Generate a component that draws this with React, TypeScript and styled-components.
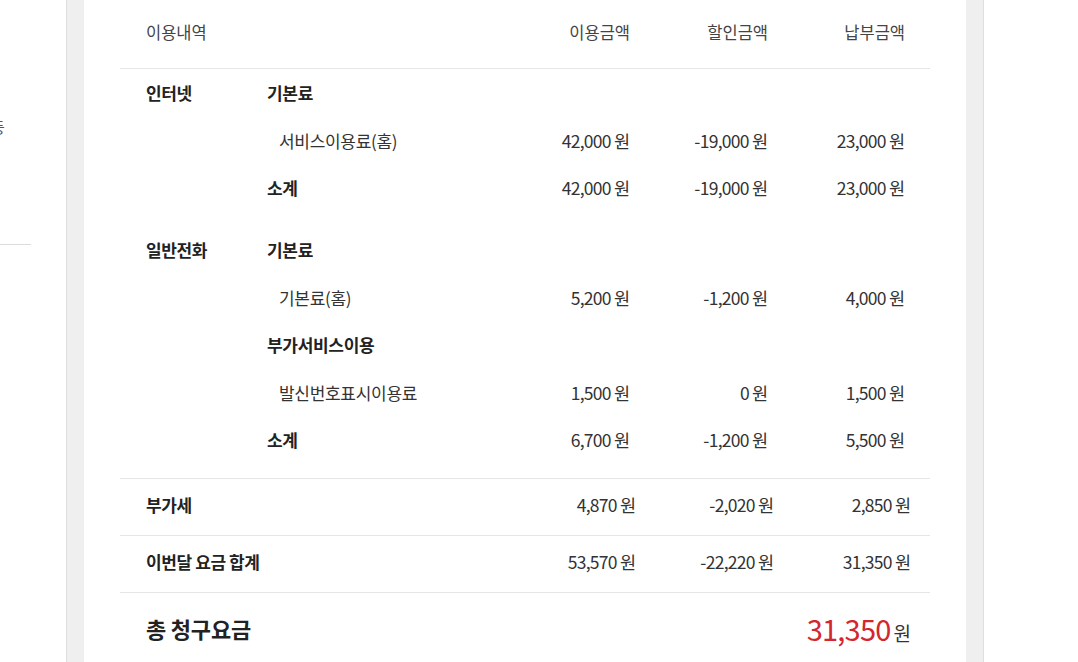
import React from "react";
import styled, { createGlobalStyle } from "styled-components";

const Global = createGlobalStyle`
  html, body { margin: 0; padding: 0; background: #fff; }
  body { font-family: "Noto Sans CJK KR", "Noto Sans", sans-serif; color: #333; }
  * { box-sizing: border-box; }
`;

const Page = styled.div`
  display: flex;
  width: 1078px;
  height: 662px;
  overflow: hidden;
  background: #fff;
`;

const SidePane = styled.div`
  width: 66px;
  flex: none;
  overflow: hidden;
  display: flex;
  flex-direction: column;
`;

const SideText = styled.div`
  margin: 116px 0 0 -9px;
  font-size: 15px;
  line-height: 22px;
  color: #555;
`;

const SideRule = styled.div`
  margin-top: 106px;
  width: 31px;
  height: 1px;
  background: #dcdcdc;
`;

const Frame = styled.div`
  width: 918px;
  flex: none;
  background: #efefef;
  border-left: 1px solid #dedede;
  border-right: 1px solid #dedede;
  padding: 0 17px;
  display: flex;
`;

const Panel = styled.div`
  width: 882px;
  background: #fff;
  padding: 0 36px;
`;

const Grid = styled.div<{ $pr?: number }>`
  display: grid;
  grid-template-columns: 121px 1fr 138px 138px 137px;
  padding: 0 ${(p) => p.$pr ?? 25}px 0 26px;
  align-items: center;
`;

const HeadRow = styled(Grid)`
  height: 69px;
  padding-bottom: 4px;
  border-bottom: 1px solid #e6e6e6;
`;

const HeadCell = styled.div<{ $right?: boolean }>`
  font-size: 16.5px;
  color: #444;
  letter-spacing: 0;
  text-align: ${(p) => (p.$right ? "right" : "left")};
`;

const Section = styled.div`
  padding-bottom: 14.5px;
`;

const BodyRow = styled(Grid)`
  height: 47.5px;
`;

const Cat = styled.div`
  font-size: 17px;
  font-weight: 700;
  color: #222;
  letter-spacing: -0.4px;
`;

const SubTitle = styled.div`
  font-size: 17px;
  font-weight: 700;
  color: #222;
  letter-spacing: -0.3px;
`;

const Item = styled.div`
  padding-left: 12px;
  font-size: 17px;
  color: #333;
  letter-spacing: -0.3px;
`;

const Amount = styled.div`
  text-align: right;
  font-size: 17.5px;
  color: #333;
  letter-spacing: -0.7px;
  white-space: nowrap;
`;

const Won = styled.span`
  margin-left: 3px;
  letter-spacing: 0;
`;

const SumRow = styled(Grid)`
  height: 57px;
  padding-bottom: 6px;
  border-top: 1px solid #e6e6e6;
`;

const TotalRow = styled.div`
  border-top: 1px solid #e6e6e6;
  display: flex;
  align-items: center;
  justify-content: space-between;
  padding: 14px 19px 0 26px;
`;

const TotalLabel = styled.div`
  font-size: 22px;
  font-weight: 700;
  color: #222;
  letter-spacing: -0.2px;
`;

const TotalValue = styled.div`
  display: flex;
  align-items: baseline;
  white-space: nowrap;
`;

const TotalNum = styled.span`
  font-size: 29px;
  color: #d3262e;
  letter-spacing: -0.8px;
`;

const TotalWon = styled.span`
  margin-left: 3px;
  font-size: 19px;
  color: #333;
`;

const Money = ({ v }: { v: string }) => (
  <Amount>
    {v}
    <Won>원</Won>
  </Amount>
);

type Line =
  | { kind: "sub"; cat?: string; label: string; vals?: string[] }
  | { kind: "item"; label: string; vals: string[] };

const sections: Line[][] = [
  [
    { kind: "sub", cat: "인터넷", label: "기본료" },
    { kind: "item", label: "서비스이용료(홈)", vals: ["42,000", "-19,000", "23,000"] },
    { kind: "sub", label: "소계", vals: ["42,000", "-19,000", "23,000"] },
  ],
  [
    { kind: "sub", cat: "일반전화", label: "기본료" },
    { kind: "item", label: "기본료(홈)", vals: ["5,200", "-1,200", "4,000"] },
    { kind: "sub", label: "부가서비스이용" },
    { kind: "item", label: "발신번호표시이용료", vals: ["1,500", "0", "1,500"] },
    { kind: "sub", label: "소계", vals: ["6,700", "-1,200", "5,500"] },
  ],
];

const summary = [
  { label: "부가세", vals: ["4,870", "-2,020", "2,850"] },
  { label: "이번달 요금 합계", vals: ["53,570", "-22,220", "31,350"] },
];

export default function App() {
  return (
    <Page>
      <Global />
      <SidePane>
        <SideText>등</SideText>
        <SideRule />
      </SidePane>
      <Frame>
        <Panel>
          <HeadRow>
            <HeadCell>이용내역</HeadCell>
            <div />
            <HeadCell $right>이용금액</HeadCell>
            <HeadCell $right>할인금액</HeadCell>
            <HeadCell $right>납부금액</HeadCell>
          </HeadRow>
          {sections.map((sec, si) => (
            <Section key={si}>
              {sec.map((ln, i) => (
                <BodyRow key={i}>
                  <Cat>{ln.kind === "sub" ? ln.cat ?? "" : ""}</Cat>
                  {ln.kind === "sub" ? <SubTitle>{ln.label}</SubTitle> : <Item>{ln.label}</Item>}
                  {ln.vals ? (
                    ln.vals.map((v, k) => <Money key={k} v={v} />)
                  ) : (
                    <>
                      <div />
                      <div />
                      <div />
                    </>
                  )}
                </BodyRow>
              ))}
            </Section>
          ))}
          {summary.map((s, i) => (
            <SumRow key={i} $pr={19}>
              <Cat style={{ gridColumn: "1 / 3" }}>{s.label}</Cat>
              {s.vals.map((v, k) => (
                <Money key={k} v={v} />
              ))}
            </SumRow>
          ))}
          <TotalRow>
            <TotalLabel>총 청구요금</TotalLabel>
            <TotalValue>
              <TotalNum>31,350</TotalNum>
              <TotalWon>원</TotalWon>
            </TotalValue>
          </TotalRow>
        </Panel>
      </Frame>
    </Page>
  );
}
